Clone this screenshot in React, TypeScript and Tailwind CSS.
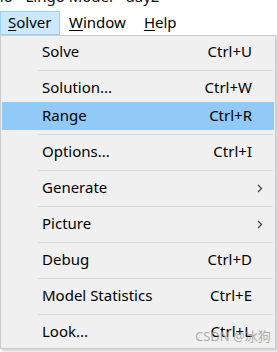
import React from "react";

type Item =
  | { kind: "item"; label: string; shortcut?: string; sub?: boolean; active?: boolean }
  | { kind: "sep" };

const items: Item[] = [
  { kind: "item", label: "Solve", shortcut: "Ctrl+U" },
  { kind: "sep" },
  { kind: "item", label: "Solution...", shortcut: "Ctrl+W" },
  { kind: "item", label: "Range", shortcut: "Ctrl+R", active: true },
  { kind: "sep" },
  { kind: "item", label: "Options...", shortcut: "Ctrl+I" },
  { kind: "sep" },
  { kind: "item", label: "Generate", sub: true },
  { kind: "sep" },
  { kind: "item", label: "Picture", sub: true },
  { kind: "sep" },
  { kind: "item", label: "Debug", shortcut: "Ctrl+D" },
  { kind: "sep" },
  { kind: "item", label: "Model Statistics", shortcut: "Ctrl+E" },
  { kind: "sep" },
  { kind: "item", label: "Look...", shortcut: "Ctrl+L" },
];

function Chevron() {
  return (
    <svg width="6" height="9" viewBox="0 0 6 9" className="block">
      <path d="M1 1 L4.5 4.5 L1 8" fill="none" stroke="#444" strokeWidth="1.3" />
    </svg>
  );
}

export default function App() {
  return (
    <div className="relative w-[277px] h-[352px] overflow-hidden bg-white text-black font-['Noto_Sans',sans-serif]">
      {/* window title (cut off) */}
      <div className="h-[11px] overflow-hidden">
        <div className="-mt-[14px] -ml-[8px] whitespace-nowrap text-[15px] leading-[20px] text-[#111]">
          Lio - Lingo Model - day2
        </div>
      </div>
      {/* menu bar */}
      <div className="flex h-[24px] items-stretch text-[15px]">
        <div className="flex w-[60px] items-center border border-[#99d1ff] bg-[#cce8ff] pl-[7px] pb-[1px]">
          <span>
            <span className="underline underline-offset-[2px]">S</span>olver
          </span>
        </div>
        <div className="flex items-center pl-[9px] pb-[1px]">
          <span>
            <span className="underline underline-offset-[2px]">W</span>indow
          </span>
        </div>
        <div className="flex items-center pl-[18px] pb-[1px]">
          <span>
            <span className="underline underline-offset-[2px]">H</span>elp
          </span>
        </div>
      </div>
      {/* dropdown */}
      <div className="w-[276px] border border-[#cccccc] bg-[#f0f0f0] px-[1px] py-[2px] text-[15px] shadow-[2px_2px_3px_rgba(0,0,0,0.2)]">
        {items.map((it, i) =>
          it.kind === "sep" ? (
            <div key={i} className="flex h-[8px] items-center pl-[36px] pr-[1px]">
              <div className="h-px w-full bg-[#d7d7d7]" />
            </div>
          ) : (
            <div
              key={i}
              className={`flex h-[28px] items-center pl-[40px] pr-[22px] ${
                it.active ? "bg-[#91c9f7]" : ""
              }`}
            >
              <span className="flex-1 pb-[1px]">{it.label}</span>
              {it.shortcut && <span className="pb-[1px]">{it.shortcut}</span>}
              {it.sub && (
                <span className="-mr-[11px]">
                  <Chevron />
                </span>
              )}
            </div>
          )
        )}
      </div>
      {/* watermark */}
      <div className="absolute left-[195px] top-[327px] whitespace-nowrap text-[13px] text-[#999999]/80 font-['Noto_Sans','Noto_Sans_CJK_SC',sans-serif]">
        CSDN @冰狗
      </div>
    </div>
  );
}
